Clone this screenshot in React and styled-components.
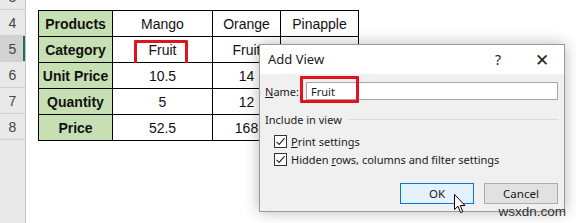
import React from 'react';
import styled, { createGlobalStyle } from 'styled-components';

const GlobalStyle = createGlobalStyle`
  html, body { margin: 0; padding: 0; background: #ffffff; }
  #root { width: 576px; height: 223px; }
`;

const Page = styled.div`
  position: relative;
  width: 576px;
  height: 223px;
  overflow: hidden;
  background: #ffffff;
  display: flex;
`;

const RowHeaders = styled.div`
  width: 25px;
  flex-shrink: 0;
  background: #e9e9e9;
  border-right: 1px solid #c8c8c8;
  display: flex;
  flex-direction: column;
  margin-top: -16px;
`;

const RowHead = styled.div`
  height: 25px;
  border-bottom: 1px solid #d0d0d0;
  display: flex;
  align-items: center;
  justify-content: center;
  font-family: "Liberation Sans", Arial, sans-serif;
  font-size: 14px;
  color: #444;
  background: ${p => (p.active ? '#d2d2d2' : 'transparent')};
  box-shadow: ${p => (p.active ? 'inset -2px 0 0 #217346' : 'none')};
`;

const Canvas = styled.div`
  flex: 1;
  padding: 10px 0 0 12px;
`;

const Table = styled.table`
  border-collapse: collapse;
  table-layout: fixed;
  font-family: "Liberation Sans", Arial, sans-serif;
  font-size: 14px;
  color: #111;
`;

const Cell = styled.td`
  border: 1px solid #000;
  height: 25px;
  padding: 0;
  text-align: center;
  position: relative;
  background: ${p => (p.head ? '#c6e0b4' : '#ffffff')};
  font-weight: ${p => (p.head ? 700 : 400)};
`;

const RedBox = styled.div`
  position: absolute;
  border: 3px solid #e0141e;
  border-radius: 1px;
  pointer-events: none;
`;

const Dialog = styled.div`
  position: absolute;
  left: 259px;
  top: 44px;
  width: 304px;
  height: 166px;
  border: 1px solid #9a9a9a;
  background: #f0f0f0;
  box-shadow: 0 0 14px rgba(0, 0, 0, 0.28);
  display: flex;
  flex-direction: column;
  font-family: "Noto Sans", "Liberation Sans", sans-serif;
  font-size: 11px;
  line-height: 15px;
  color: #1a1a1a;
`;

const TitleBar = styled.div`
  height: 29px;
  background: #ffffff;
  display: flex;
  align-items: center;
  padding: 0 0 0 8px;
  font-size: 13px;
`;

const Title = styled.div`
  flex: 1;
`;

const TitleBtn = styled.div`
  width: 44px;
  text-align: center;
  font-size: ${p => p.size || 14}px;
  color: #222;
`;

const Body = styled.div`
  flex: 1;
  padding: 8px 6px 0 5px;
  display: flex;
  flex-direction: column;
`;

const NameRow = styled.div`
  display: flex;
  align-items: center;
  height: 18px;
  position: relative;
`;

const Label = styled.span`
  width: 41px;
`;

const Input = styled.div`
  flex: 1;
  height: 18px;
  box-sizing: border-box;
  border: 1px solid #a5a5a5;
  background: #ffffff;
  display: flex;
  align-items: center;
  padding-left: 4px;
`;

const Group = styled.div`
  display: flex;
  align-items: center;
  gap: 6px;
  margin-top: 12px;
  &::after {
    content: '';
    flex: 1;
    height: 1px;
    background: #dcdcdc;
  }
`;

const CheckRow = styled.div`
  display: flex;
  align-items: center;
  gap: 4px;
  padding-left: 9px;
  height: 15px;
  margin-top: ${p => p.mt}px;
`;

const Box = styled.div`
  width: 13px;
  height: 13px;
  border: 1px solid #333;
  background: #fff;
  box-sizing: border-box;
  display: flex;
  align-items: center;
  justify-content: center;
`;

const Buttons = styled.div`
  display: flex;
  justify-content: flex-end;
  gap: 10px;
  margin-top: 16px;
`;

const Button = styled.div`
  width: 74px;
  height: 21px;
  box-sizing: border-box;
  display: flex;
  align-items: center;
  justify-content: center;
  font-size: 11.5px;
  border: 1px solid ${p => (p.primary ? '#0078d7' : '#adadad')};
  background: ${p => (p.primary ? '#e5f1fb' : '#e1e1e1')};
`;

const Watermark = styled.div`
  position: absolute;
  right: 10px;
  bottom: 4px;
  font-family: "Liberation Sans", Arial, sans-serif;
  font-size: 13.5px;
  color: #333;
`;

const Cursor = styled.svg`
  position: absolute;
  left: 454px;
  top: 194px;
`;

const U = styled.span`
  text-decoration: underline;
`;

const Check = () => (
  <svg width="11" height="11" viewBox="0 0 11 11">
    <path d="M1.5 5.8 L4.2 8.4 L9.6 2.2" fill="none" stroke="#222" strokeWidth="1.1" />
  </svg>
);

const rows = [
  ['Products', 'Mango', 'Orange', 'Pinapple'],
  ['Category', 'Fruit', 'Fruit', ''],
  ['Unit Price', '10.5', '14', ''],
  ['Quantity', '5', '12', ''],
  ['Price', '52.5', '168', ''],
];

export default function App() {
  return (
    <>
      <GlobalStyle />
      <Page>
        <RowHeaders>
          {[3, 4, 5, 6, 7, 8].map(n => (
            <RowHead key={n} active={n === 5}>{n}</RowHead>
          ))}
        </RowHeaders>
        <Canvas>
          <Table>
            <colgroup>
              <col style={{ width: 74 }} />
              <col style={{ width: 100 }} />
              <col style={{ width: 68 }} />
              <col style={{ width: 78 }} />
            </colgroup>
            <tbody>
              {rows.map((r, i) => (
                <tr key={i}>
                  {r.map((c, j) => (
                    <Cell key={j} head={j === 0}>
                      {c}
                      {i === 1 && j === 1 && (
                        <RedBox style={{ left: 21, top: 3, width: 48, height: 20 }} />
                      )}
                    </Cell>
                  ))}
                </tr>
              ))}
            </tbody>
          </Table>
        </Canvas>

        <Dialog>
          <TitleBar>
            <Title>Add View</Title>
            <TitleBtn>?</TitleBtn>
            <TitleBtn size={17}>✕</TitleBtn>
          </TitleBar>
          <Body>
            <NameRow>
              <Label><U>N</U>ame:</Label>
              <Input>Fruit</Input>
              <RedBox style={{ left: 35, top: -6, width: 53, height: 21 }} />
            </NameRow>
            <Group>Include in view</Group>
            <CheckRow mt={7}>
              <Box><Check /></Box>
              <span><U>P</U>rint settings</span>
            </CheckRow>
            <CheckRow mt={3}>
              <Box><Check /></Box>
              <span>Hidden <U>r</U>ows, columns and filter settings</span>
            </CheckRow>
            <Buttons>
              <Button primary>OK</Button>
              <Button>Cancel</Button>
            </Buttons>
          </Body>
        </Dialog>

        <Cursor width="13" height="20" viewBox="0 0 13 20">
          <path d="M0.5 0.5 L0.5 15.5 L4 12.2 L6.6 18.6 L8.8 17.7 L6.3 11.5 L11 11.5 Z" fill="#fff" stroke="#000" strokeWidth="1" />
        </Cursor>
        <Watermark>wsxdn.com</Watermark>
      </Page>
    </>
  );
}
